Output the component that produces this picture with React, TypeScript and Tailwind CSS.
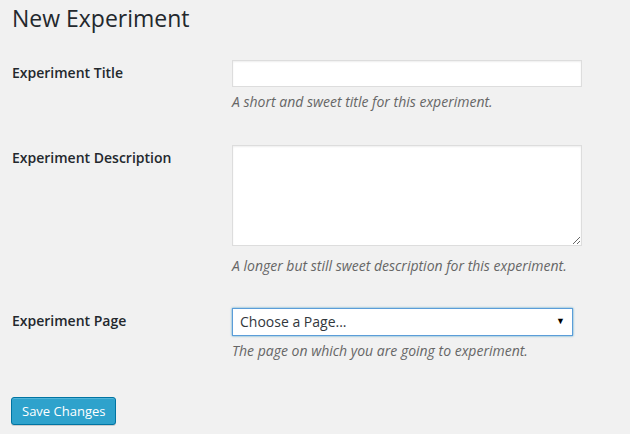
export default function App() {
  return (
    <div className="min-h-screen bg-[#f1f1f1] pl-[12px] font-['Open_Sans',sans-serif] text-[#444]">
      <h1 className="pt-[4px] text-[23px] font-normal leading-[29px] text-[#23282d]">
        New Experiment
      </h1>

      {/* Title */}
      <div className="mt-[27px] flex">
        <label
          htmlFor="exp-title"
          className="w-[220px] shrink-0 pt-[4px] text-[14px] font-semibold leading-[18px] text-[#23282d]"
        >
          Experiment Title
        </label>
        <div className="flex flex-col">
          <input
            id="exp-title"
            type="text"
            className="h-[27px] w-[350px] border border-[#ddd] bg-white px-[6px] text-[14px] text-[#32373c] shadow-[inset_0_1px_2px_rgba(0,0,0,0.07)] outline-none"
          />
          <p className="mt-[5px] text-[14px] italic leading-[20px] text-[#666]">
            A short and sweet title for this experiment.
          </p>
        </div>
      </div>

      {/* Description */}
      <div className="mt-[33px] flex">
        <label
          htmlFor="exp-desc"
          className="w-[220px] shrink-0 pt-[4px] text-[14px] font-semibold leading-[18px] text-[#23282d]"
        >
          Experiment Description
        </label>
        <div className="flex flex-col">
          <textarea
            id="exp-desc"
            className="h-[101px] w-[350px] border border-[#ddd] bg-white px-[6px] text-[14px] text-[#32373c] shadow-[inset_0_1px_2px_rgba(0,0,0,0.07)] outline-none"
          />
          <p className="mt-[10px] text-[14px] italic leading-[20px] text-[#666]">
            A longer but still sweet description for this experiment.
          </p>
        </div>
      </div>

      {/* Page */}
      <div className="mt-[32px] flex">
        <label
          htmlFor="exp-page"
          className="w-[220px] shrink-0 pt-[4px] text-[14px] font-semibold leading-[18px] text-[#23282d]"
        >
          Experiment Page
        </label>
        <div className="flex flex-col">
          <div className="relative w-[341px]">
            <select
              id="exp-page"
              className="h-[28px] w-full appearance-none border border-[#5b9dd9] bg-white pl-[7px] text-[14px] leading-[26px] text-[#32373c] shadow-[0_0_2px_rgba(30,140,190,0.8)] outline-none"
            >
              <option>Choose a Page...</option>
            </select>
            <span className="pointer-events-none absolute right-[8px] top-[7px] text-[9px] leading-[12px] text-black">
              ▼
            </span>
          </div>
          <p className="mt-[5px] text-[14px] italic leading-[20px] text-[#666]">
            The page on which you are going to experiment.
          </p>
        </div>
      </div>

      <button
        type="button"
        className="-ml-[1px] mt-[36px] h-[28px] rounded-[3px] border border-[#0074a2] bg-[#2ea2cc] px-[10px] text-[13px] leading-[26px] text-white shadow-[inset_0_1px_0_rgba(120,200,230,0.5),0_1px_0_rgba(0,0,0,0.15)]"
      >
        Save Changes
      </button>
    </div>
  );
}
